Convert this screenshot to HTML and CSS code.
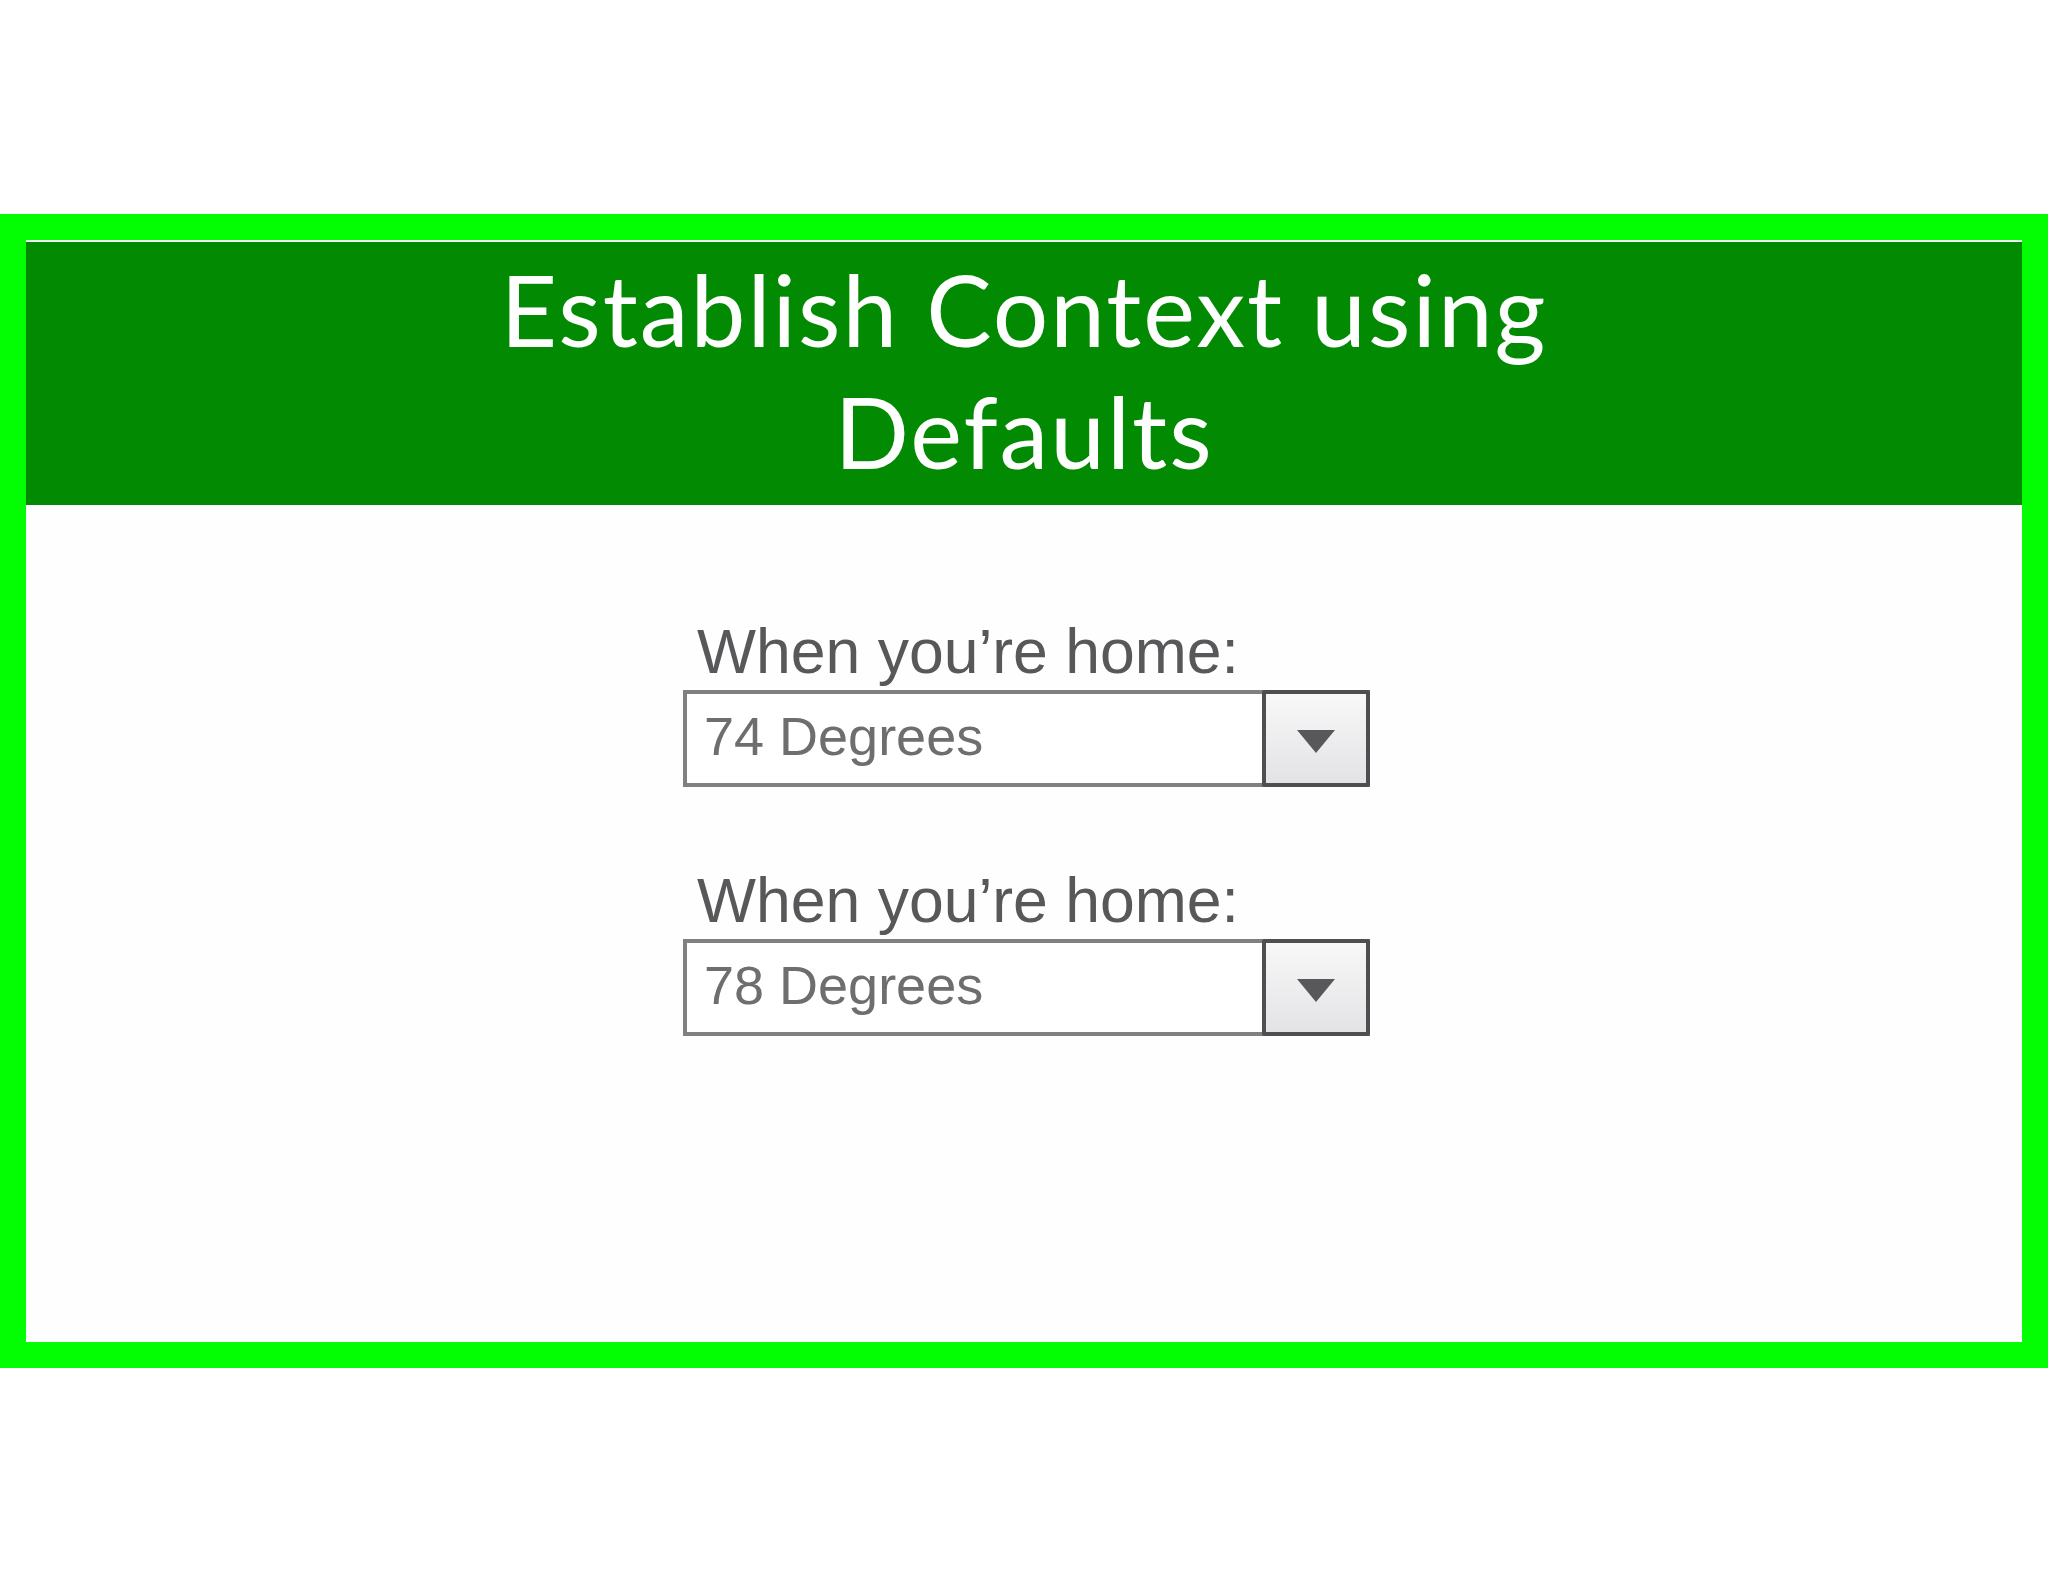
FILE: index.html
```html
<!DOCTYPE html>
<html lang="en">
<head>
<meta charset="UTF-8">
<meta name="viewport" content="width=device-width, initial-scale=1.0">
<title>Establish Context using Defaults</title>
<link rel="stylesheet" href="styles.css">
</head>
<body>
<div class="slide">
<header class="title-bar">
<h1>Establish Context using<br>Defaults</h1>
</header>
<main class="content">
<form class="settings">
<div class="setting">
<label class="setting-label" for="temp-home-1">When you’re home:</label>
<div class="dropdown" id="temp-home-1">
<span class="dropdown-value">74 Degrees</span>
<span class="dropdown-button"><span class="arrow"></span></span>
</div>
</div>
<div class="setting">
<label class="setting-label" for="temp-home-2">When you’re home:</label>
<div class="dropdown" id="temp-home-2">
<span class="dropdown-value">78 Degrees</span>
<span class="dropdown-button"><span class="arrow"></span></span>
</div>
</div>
</form>
</main>
</div>
</body>
</html>
```

FILE: styles.css
```css
body {
    margin: 0;
    background-color: #fff;
    font-family: "Liberation Sans", Arial, sans-serif;
}

.slide {
    box-sizing: border-box;
    width: 2048px;
    height: 1154px;
    margin-top: 214px;
    border: 26px solid #03fd03;
    background-color: #fefefe;
    display: flex;
    flex-direction: column;
}

.title-bar {
    border-top: 2px solid #f4fbf4;
    background-color: #038a03;
    padding: 6px 0 13px;
}

.title-bar h1 {
    margin: 0;
    color: #fff;
    font-family: Lato, "Open Sans", sans-serif;
    font-weight: 400;
    font-size: 98px;
    letter-spacing: 2px;
    line-height: 122px;
    text-align: center;
}

.content {
    flex: 1;
    padding: 111px 0 0 5px;
}

.settings {
    width: 687px;
    margin: 0 auto;
}

.setting + .setting {
    margin-top: 78px;
}

.setting-label {
    display: block;
    padding-left: 14px;
    margin-bottom: 4px;
    color: #58585a;
    font-size: 62.5px;
    line-height: 70px;
}

.dropdown {
    display: flex;
    height: 97px;
    box-sizing: border-box;
    border: 4px solid #808080;
    background-color: #fff;
}

.dropdown-value {
    flex: 1;
    padding: 0 0 4px 17px;
    color: #6e6e6e;
    font-size: 54px;
    line-height: 85px;
}

.dropdown-button {
    box-sizing: border-box;
    width: 108px;
    margin: -4px -4px -4px 0;
    border: 4px solid #4f4f51;
    border-radius: 2px;
    background: linear-gradient(#f8f8f9, #e3e3e5);
    display: flex;
    align-items: center;
    justify-content: center;
}

.arrow {
    width: 0;
    height: 0;
    margin-top: 5px;
    border-left: 19px solid transparent;
    border-right: 19px solid transparent;
    border-top: 23px solid #58585a;
}
```
